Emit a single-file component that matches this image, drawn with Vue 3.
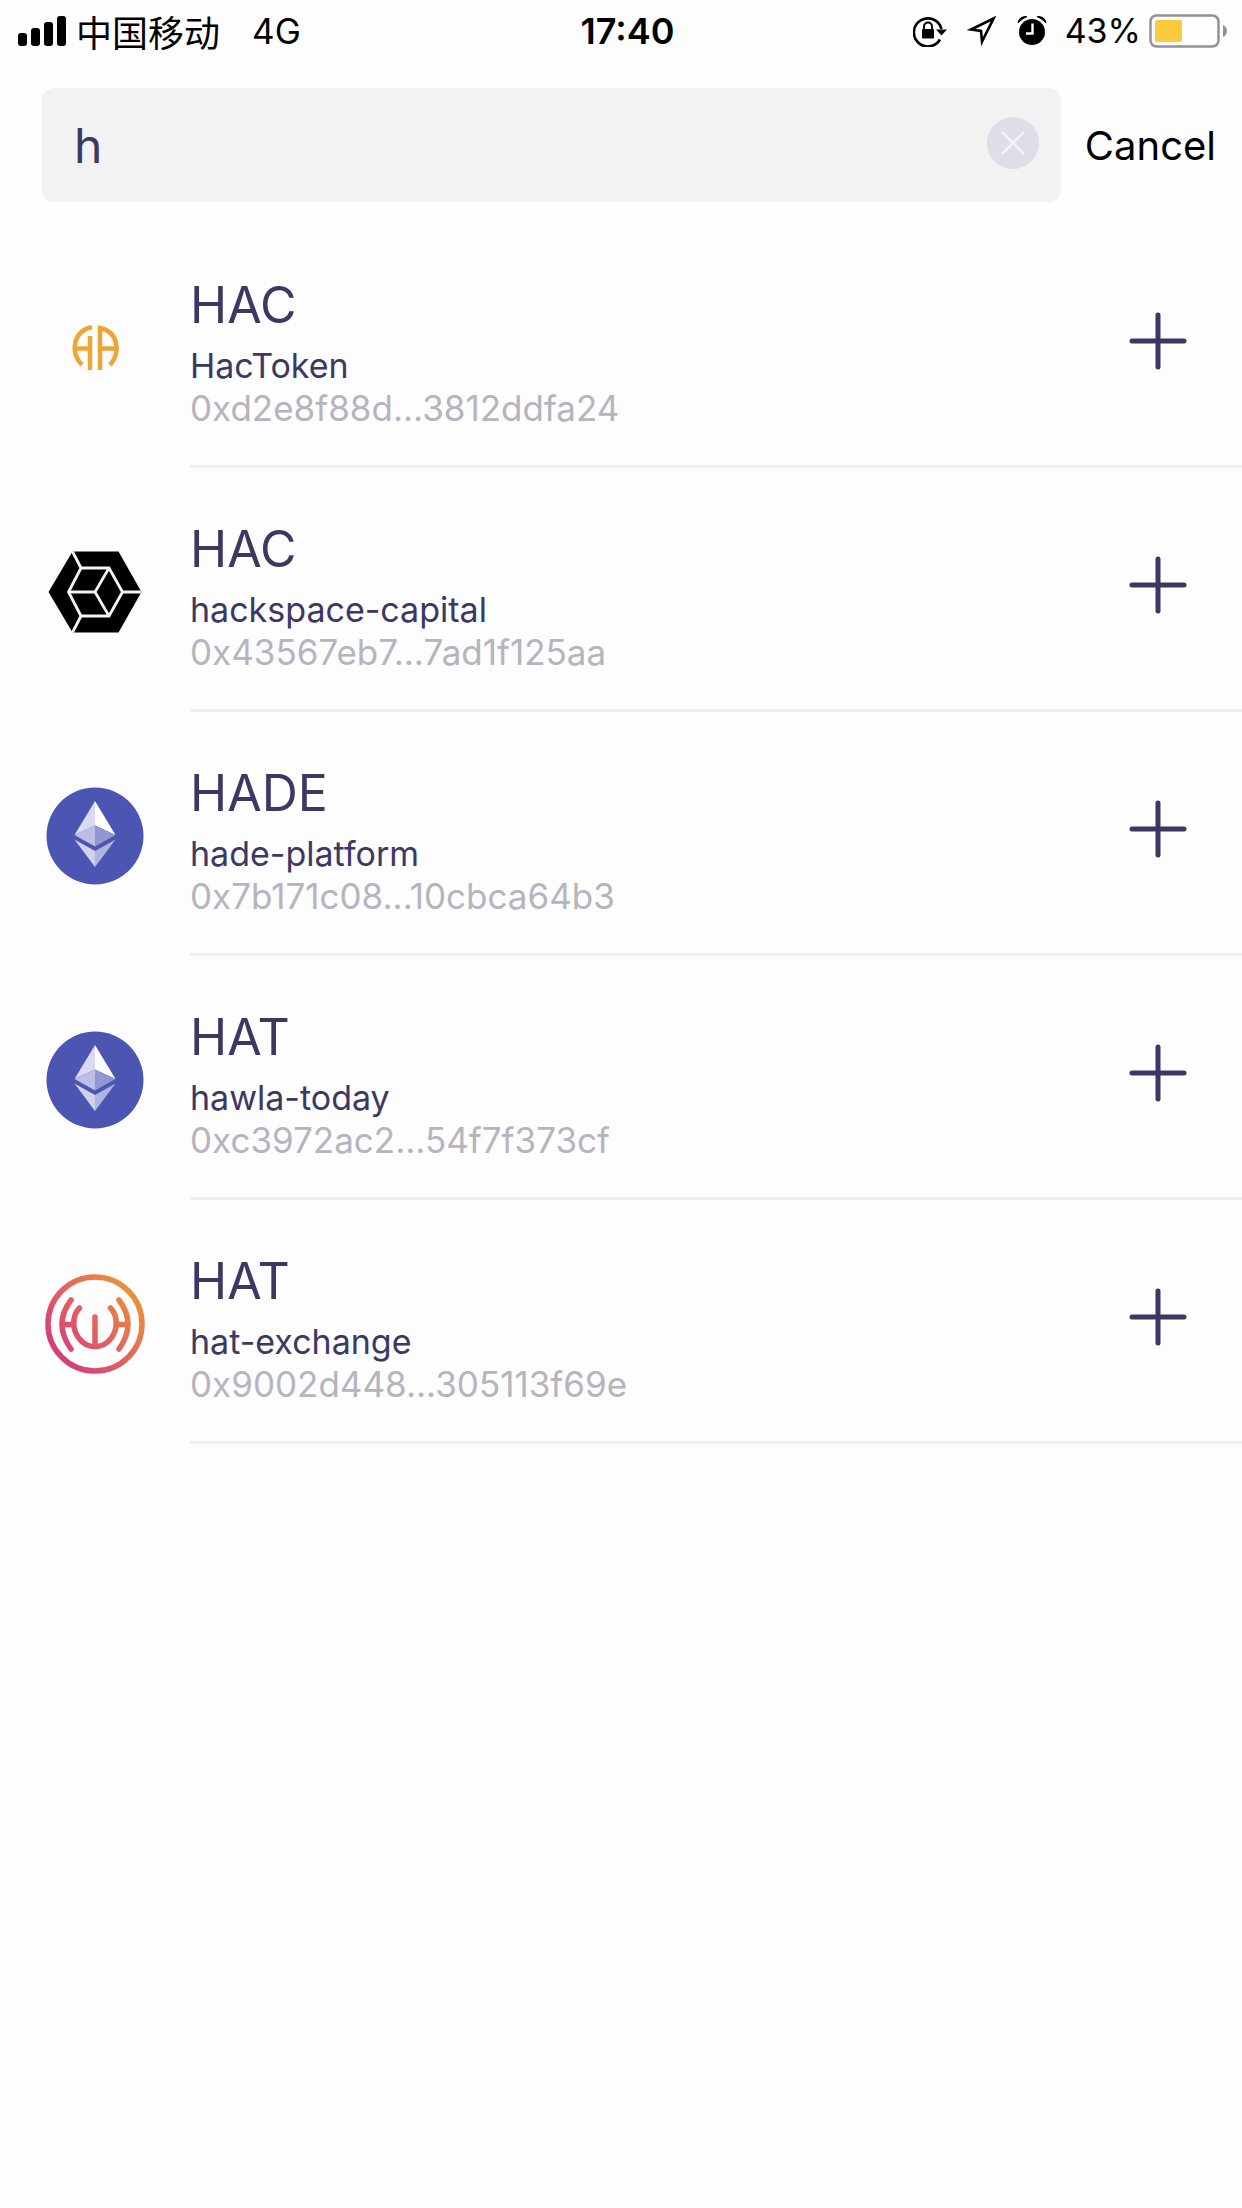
<template>
  <div class="token-search">
    <header class="status-bar">
      <div class="status-left">
        <svg class="signal" width="48" height="32" viewBox="0 0 48 32">
          <rect x="0" y="18" width="9" height="13" rx="3" />
          <rect x="13" y="13" width="9" height="18" rx="3" />
          <rect x="26" y="7" width="9" height="24" rx="3" />
          <rect x="39" y="1" width="9" height="30" rx="3" />
        </svg>
        <span class="carrier">中国移动</span>
        <span>4G</span>
      </div>
      <time class="clock">17:40</time>
      <div class="status-right">
        <!-- Rotation lock -->
        <svg width="34" height="32" viewBox="0 0 34 32">
          <path
            d="M27 24.5A14 14 0 1 1 28.5 14"
            fill="none"
            stroke="#000"
            stroke-width="2.6"
          />
          <path d="M23 14.5h11l-5.5 6z" />
          <rect x="9" y="14" width="12" height="9.5" rx="1" />
          <path d="M11 15v-3.5a4 4 0 0 1 8 0V15" fill="none" stroke="#000" stroke-width="2" />
        </svg>
        <!-- Location arrow -->
        <svg class="location" width="30" height="32" viewBox="0 0 30 32">
          <path
            d="M26.5 3.5L4 14.5L14 16L15 26.5Z"
            fill="none"
            stroke="#000"
            stroke-width="2.6"
          />
        </svg>
        <!-- Alarm -->
        <svg class="alarm" width="30" height="32" viewBox="0 0 30 32">
          <circle cx="15" cy="17" r="13" />
          <path d="M1 8Q2 1 10 1.5Q5 3.500 1 8M29 8Q28 1 20 1.5Q25 3.500 29 8" stroke="#000" />
          <path d="M15.5 8.5V18.5H9" fill="none" stroke="#fff" stroke-width="2.4" />
        </svg>
        <span>43%</span>
        <svg class="battery" width="80" height="34" viewBox="0 0 80 34">
          <rect
            x="1.5"
            y="1.5"
            width="68"
            height="31"
            rx="6"
            fill="none"
            stroke="#929196"
            stroke-width="2.5"
          />
          <rect x="6" y="6" width="27" height="22" rx="2" fill="#fbcb3e" />
          <path d="M74 11q4 2 4 6t-4 6z" fill="#929196" />
        </svg>
      </div>
    </header>

    <form class="search-bar" @submit.prevent>
      <div class="search-field">
        <input v-model="keyword" type="text" aria-label="Search tokens" />
        <button type="button" class="clear" aria-label="Clear" @click="keyword = ''">
          <svg width="52" height="52" viewBox="0 0 52 52">
            <circle cx="26" cy="26" r="26" fill="#dedde8" />
            <path d="M15 15l22 22M37 15L15 37" stroke="#f4f4f8" stroke-width="2.5" />
          </svg>
        </button>
      </div>
      <button type="button" class="cancel">Cancel</button>
    </form>

    <ul class="token-list">
      <li v-for="token in tokens" :key="token.address" class="token">
        <svg class="logo" width="100" height="100" viewBox="0 0 100 100">
          <g v-if="token.logo === 'hac'" fill="none" stroke="#eca636" stroke-width="4.5">
            <path d="M47 29C29 33 24 53 37 67M45 38V72M30 50.5H45" />
            <path d="M55 72V30C72 33 77 53 65 67M55 50.5H70" />
          </g>
          <g v-else-if="token.logo === 'hackspace'">
            <path d="M3.5 50L27.5 9.5H73.5L96.5 50L73.5 90.5H27.5Z" />
            <path
              d="M36 26H64L77.5 50L64 74H36L23.5 50ZM27.5 9.5L36 26M27.5 90.5L36 74M77.5 50H96.5M23.5 50H50M64 26L50 50L64 74"
              fill="none"
              stroke="#f4f4f4"
              stroke-width="2.8"
            />
          </g>
          <g v-else-if="token.logo === 'eth'">
            <circle cx="50" cy="50" r="48.5" fill="#4c55b2" />
            <path d="M50 15L29.5 49L50 39.5Z" fill="#d9daf0" />
            <path d="M50 15L70.5 49L50 39.5Z" fill="#fff" />
            <path d="M50 39.5L29.5 49L50 60.5Z" fill="#bcbee6" />
            <path d="M50 39.5L70.5 49L50 60.5Z" fill="#9297d3" />
            <path d="M29.5 53.5L50 65V81Z" fill="#d0d2ed" />
            <path d="M70.5 53.5L50 65V81Z" fill="#b0b4e0" />
          </g>
          <g
            v-else
            fill="none"
            stroke="url(#hat-gradient)"
            stroke-width="5.5"
            stroke-linecap="round"
          >
            <defs>
              <linearGradient
                id="hat-gradient"
                gradientUnits="userSpaceOnUse"
                x1="15"
                y1="80"
                x2="85"
                y2="20"
              >
                <stop offset="0" stop-color="#d43f7c" />
                <stop offset="0.5" stop-color="#e4625f" />
                <stop offset="1" stop-color="#e98f3c" />
              </linearGradient>
            </defs>
            <circle cx="50" cy="50" r="47" />
            <path d="M26 26Q8 50 26 75M74 26Q92 50 74 75" />
            <path d="M34.5 34C22 47 31 72.5 50 72.5C69 72.5 78 47 65.5 34" />
            <path d="M50 43V72M18 50.5H28M72 50.5H82" />
          </g>
        </svg>
        <div class="info">
          <h2 class="symbol">{{ token.symbol }}</h2>
          <p class="name">{{ token.name }}</p>
          <p class="address">{{ token.address }}</p>
        </div>
        <button type="button" class="add" :aria-label="'Add ' + token.name">
          <svg width="58" height="58" viewBox="0 0 58 58">
            <path d="M29 3V55M3 29H55" stroke="#3b3963" stroke-width="5" stroke-linecap="round" />
          </svg>
        </button>
      </li>
    </ul>
  </div>
</template>

<script setup>
import { ref } from 'vue'

const keyword = ref('h')

const tokens = ref([
  { symbol: 'HAC', name: 'HacToken', address: '0xd2e8f88d...3812ddfa24', logo: 'hac' },
  { symbol: 'HAC', name: 'hackspace-capital', address: '0x43567eb7...7ad1f125aa', logo: 'hackspace' },
  { symbol: 'HADE', name: 'hade-platform', address: '0x7b171c08...10cbca64b3', logo: 'eth' },
  { symbol: 'HAT', name: 'hawla-today', address: '0xc3972ac2...54f7f373cf', logo: 'eth' },
  { symbol: 'HAT', name: 'hat-exchange', address: '0x9002d448...305113f69e', logo: 'hat' }
])
</script>

<style>
body {
  margin: 0;
  background: #fdfdfd;
}
</style>

<style scoped>
.token-search {
  font-family: Inter, "Noto Sans CJK SC", sans-serif;
  color: #3b3963;
}

svg {
  display: block;
  flex: none;
}

button {
  padding: 0;
  border: none;
  background: none;
  font-family: inherit;
  cursor: pointer;
}

.status-bar {
  display: grid;
  grid-template-columns: 1fr auto 1fr;
  align-items: center;
  height: 61px;
  padding: 0 13px 0 18px;
  font-size: 35px;
  color: #000;
}

.status-left,
.status-right {
  display: flex;
  align-items: center;
}

.status-right {
  justify-content: flex-end;
}

.carrier {
  margin: 0 32px 0 10px;
  font-size: 36px;
}

.clock {
  padding-left: 8px;
  font-size: 36px;
  font-weight: 600;
}

.location {
  margin-left: 20px;
}

.alarm {
  margin: 0 18px 0 20px;
}

.battery {
  margin-left: 8px;
}

.status-right span {
  font-size: 34px;
}

.search-bar {
  display: flex;
  align-items: center;
  gap: 24px;
  padding: 27px 26px 22px 42px;
}

.search-field {
  display: flex;
  flex: 1;
  align-items: center;
  height: 114px;
  padding: 0 22px 0 32px;
  border-radius: 12px;
  background: #f2f2f2;
}

.search-field input {
  flex: 1;
  min-width: 0;
  padding: 0;
  border: none;
  outline: none;
  background: none;
  font-family: inherit;
  font-size: 48px;
  color: inherit;
}

.clear {
  padding-bottom: 4px;
}

.cancel {
  font-size: 40px;
  color: #000;
}

.token-list {
  margin: 0;
  padding: 0;
  list-style: none;
}

.token {
  display: flex;
  align-items: flex-start;
  padding-left: 45px;
}

.logo {
  margin-top: 74px;
}

.info {
  flex: 1;
  margin-left: 45px;
  padding: 51px 0 36px;
  border-bottom: 3px solid #efeff0;
}

.symbol {
  margin: 0 0 10px;
  font-size: 50px;
  line-height: 60px;
  font-weight: 400;
}

.name,
.address {
  margin: 0;
  line-height: 42px;
}

.name {
  font-size: 34px;
}

.address {
  font-size: 35px;
  color: #b5b4bf;
}

.add {
  align-self: stretch;
  padding: 0 55px 8px;
  border-bottom: 3px solid #efeff0;
}
</style>
